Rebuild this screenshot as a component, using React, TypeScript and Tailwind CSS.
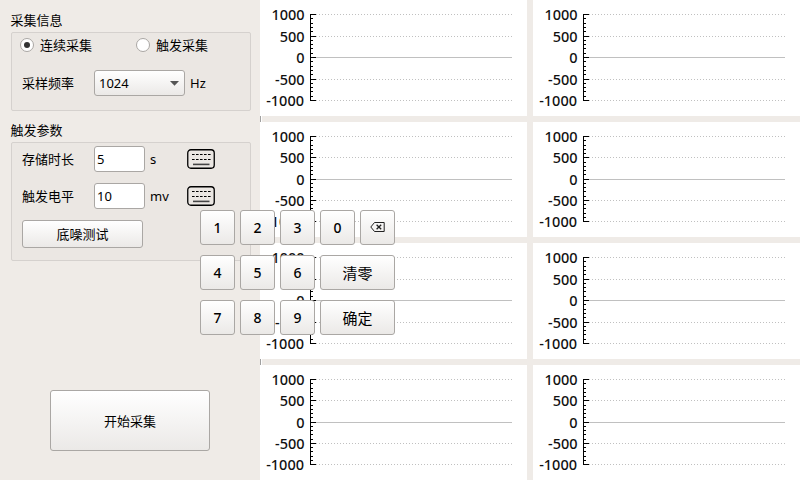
import React from "react";

const font = "font-['Noto_Sans','Noto_Sans_CJK_SC',sans-serif]";
const face = "border border-[#aaa7a4] rounded-[3px] bg-linear-to-b from-white to-[#ebe9e7] flex items-center justify-center";

function Chart({ span, height, mark }: { span: number; height: number; mark?: boolean }) {
  const ys = Array.from({ length: 21 }, (_, i) => Math.floor(14.5 + (span * i) / 20));
  return (
    <div className="relative bg-white" style={{ height }}>
      <svg width="267" height={height} className="block overflow-visible" shapeRendering="crispEdges">
        {ys.map((y, i) => {
          const major = i % 5 === 0;
          return (
            <g key={i}>
              {major && (
                <line x1="56" x2="252" y1={y + 0.5} y2={y + 0.5} stroke="#c0c0c0" strokeDasharray={i === 10 ? undefined : "1 2"} />
              )}
              <rect x="50" y={y} width={major ? 6 : 3} height="1" />
            </g>
          );
        })}
        <rect x="50" y="14" width="1" height={span + 1} />
        {mark && <rect x="0" y={height} width="2" height="6" fill="#fff" />}
        {mark && <rect x="0" y={height} width="1" height="6" fill="#a0a0a0" />}
        {["1000", "500", "0", "-500", "-1000"].map((t, i) => (
          <text key={t} x={i === 4 ? 44 : 44.6} y={ys[i * 5] + 5.5} textAnchor="end" fontSize="14.5" fontWeight="500" fill="#111">
            {t}
          </text>
        ))}
      </svg>
    </div>
  );
}

function Keyboard() {
  return (
    <svg width="28" height="20" viewBox="0 0 28 20" className="block">
      <rect x="0.75" y="0.75" width="26.5" height="18.5" rx="3.2" fill="none" stroke="#000" strokeWidth="1.3" />
      <path d="M5 5.5H24M5 10.5H24" stroke="#000" strokeWidth="1.1" strokeDasharray="2.6 1.4" />
      <path d="M6 15.4H22.5" stroke="#444" strokeWidth="1.6" />
    </svg>
  );
}

function Radio({ on, label }: { on?: boolean; label: string }) {
  return (
    <div className="flex items-center gap-[6px]">
      <span className="flex size-[14px] items-center justify-center rounded-full border border-[#aaa7a4] bg-white">
        {on && <span className="size-[6px] rounded-full bg-[#333]" />}
      </span>
      <span>{label}</span>
    </div>
  );
}

function Field({ label, value, unit }: { label: string; value: string; unit: string }) {
  return (
    <div className="flex h-[26px] items-center">
      <span className="w-[72px]">{label}</span>
      <span className="flex h-[26px] w-[51px] items-center rounded-[3px] border border-[#aaa7a4] bg-white pl-[2px]">{value}</span>
      <span className="w-[42px] pl-[5px]">{unit}</span>
      <Keyboard />
    </div>
  );
}

function Backspace() {
  return (
    <svg width="15" height="10" viewBox="0 0 15 10" fill="none" stroke="#222" className="mr-[1px] mb-[2px]">
      <path d="M4.5 .5H14.2V9.5H4.5L.8 5Z" strokeWidth="1" />
      <path d="M6.6 2.7L11.2 7.3M11.2 2.7L6.6 7.3" strokeWidth="1.3" />
    </svg>
  );
}

export default function App() {
  const rows = [
    { h: 116, span: 86, mark: true },
    { h: 115, span: 85, mark: false },
    { h: 116, span: 86, mark: true },
    { h: 115, span: 85, mark: false },
  ];
  return (
    <div className={`${font} relative flex h-[480px] w-[800px] overflow-hidden bg-[#efebe7] text-[13px] leading-[18px] text-black`}>
      <aside className="w-[260px] shrink-0 pl-[11px]">
        <h2 className="-ml-[0.5px] mt-[11px] h-[21px]">采集信息</h2>
        <section className="h-[79px] w-[240px] rounded-[2px] border border-[#d5d1ce] bg-[#ebe7e3] pl-[10px]">
          <div className="-ml-[2px] flex gap-[44px] pt-[3px]">
            <Radio on label="连续采集" />
            <Radio label="触发采集" />
          </div>
          <div className="mt-[16px] flex h-[26px] items-center">
            <span className="w-[72px]">采样频率</span>
            <span className={`${face} h-[26px] w-[91px] justify-between! pr-[5px] pl-[4px]`}>
              1024
              <svg width="9" height="5">
                <path d="M0 0H9L4.5 4.7Z" fill="#555" />
              </svg>
            </span>
            <span className="pl-[5px]">Hz</span>
          </div>
        </section>
        <h2 className="-ml-[0.5px] mt-[10px] h-[21px]">触发参数</h2>
        <section className="h-[119px] w-[240px] rounded-[2px] border border-[#d5d1ce] bg-[#ebe7e3] pt-[3px] pl-[10px]">
          <Field label="存储时长" value="5" unit="s" />
          <div className="h-[11px]" />
          <Field label="触发电平" value="10" unit="mv" />
          <button className={`${face} mt-[11px] h-[28px] w-[121px]`}>底噪测试</button>
        </section>
        <button className={`${face} mt-[129px] ml-[39px] h-[61px] w-[160px]`}>开始采集</button>
      </aside>
      <main className="grid grid-cols-[267px_267px] content-start gap-[6px]">
        {rows.map((r, i) => (
          <React.Fragment key={i}>
            <Chart span={r.span} height={r.h} mark={r.mark} />
            <Chart span={r.span} height={r.h} />
          </React.Fragment>
        ))}
      </main>
      <div className="absolute top-[210px] left-[200px] grid grid-cols-[repeat(5,35px)] gap-x-[5px] gap-y-[10px] text-[14px]">
        {["1", "2", "3", "0", "back", "4", "5", "6", "清零", "7", "8", "9", "确定"].map((k) => (
          <button key={k} className={`${face} h-[35px] ${k.length === 2 ? "col-span-2 text-[15px] font-normal" : "font-medium"}`}>
            {k === "back" ? <Backspace /> : k}
          </button>
        ))}
      </div>
    </div>
  );
}
